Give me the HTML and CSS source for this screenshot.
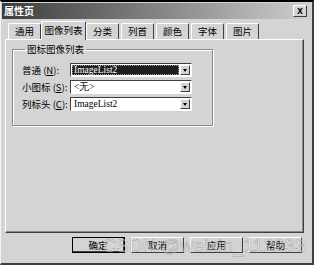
FILE: index.html
```html
<!DOCTYPE html>
<html lang="zh">
<head>
  <meta charset="UTF-8">
  <title>属性页</title>
  <link rel="stylesheet" href="styles.css">
</head>
<body>
  <div class="window">
    <div class="title-bar">
      <span class="title">属性页</span>
      <span class="close-btn">x</span>
    </div>

    <div class="tabs">
      <span class="tab">通用</span>
      <span class="tab active">图像列表</span>
      <span class="tab">分类</span>
      <span class="tab">列首</span>
      <span class="tab">颜色</span>
      <span class="tab">字体</span>
      <span class="tab">图片</span>
    </div>

    <div class="panel">
      <fieldset class="group">
        <legend>图标图像列表</legend>
        <div class="row">
          <span class="label">普通 (<u>N</u>):</span>
          <div class="combo selected">
            <span class="value">ImageList2</span>
            <span class="arrow"></span>
          </div>
        </div>
        <div class="row">
          <span class="label">小图标 (<u>S</u>):</span>
          <div class="combo">
            <span class="value">&lt;无&gt;</span>
            <span class="arrow"></span>
          </div>
        </div>
        <div class="row">
          <span class="label">列标头 (<u>C</u>):</span>
          <div class="combo">
            <span class="value">ImageList2</span>
            <span class="arrow"></span>
          </div>
        </div>
      </fieldset>
    </div>

    <div class="buttons">
      <button type="button" class="btn default">确定</button>
      <button type="button" class="btn">取消</button>
      <button type="button" class="btn">应用</button>
      <button type="button" class="btn">帮助</button>
    </div>

    <div class="watermark">CSDN @weixin_112233</div>
  </div>
</body>
</html>
```

FILE: styles.css
```css
*{margin: 0; padding: 0; box-sizing: border-box;}

html,body{
  width: 314px;
  height: 265px;
  overflow: hidden;
  background-color: #d4d4d4;
  font-family: "Noto Sans CJK SC", "Liberation Sans", sans-serif;
  font-size: 9.5px;
  color: #000;
}

.window{
  position: relative;
  width: 314px;
  height: 265px;
  border-top: 2px solid #000;
  border-left: 1px solid #f4f4f4;
  border-right: 2px solid #404040;
  border-bottom: 2px solid #404040;
  background-color: #d4d4d4;
}

.title-bar{
  height: 16px;
  margin: 1px 1px 0 1px;
  padding: 0 4px 0 2px;
  display: flex;
  align-items: center;
  justify-content: space-between;
  background: linear-gradient(to right, #3c3c3c, #8a8a8a 55%, #d0d0d0);
}
.title{
  color: #fff;
  font-weight: bold;
  font-size: 10px;
  line-height: 14px;
}
.close-btn{
  width: 14px;
  height: 12px;
  line-height: 10px;
  text-align: center;
  font-family: "Liberation Sans", sans-serif;
  font-weight: bold;
  font-size: 10px;
  background-color: #d4d4d4;
  border: 1px solid;
  border-color: #fff #404040 #404040 #fff;
}

.tabs{
  display: flex;
  align-items: flex-end;
  height: 19px;
  margin-top: 1px;
  padding-left: 7px;
}
.tab{
  width: 33px;
  height: 16px;
  text-align: center;
  line-height: 15px;
  border-top: 1px solid #fff;
  border-left: 1px solid #fff;
  border-right: 1px solid #404040;
  border-radius: 2px 2px 0 0;
  margin-right: 2px;
}
.tab.active{
  width: 45px;
  height: 19px;
  line-height: 17px;
  margin: 0 0 -1px -2px;
  position: relative;
  z-index: 1;
  background-color: #d4d4d4;
}

.panel{
  height: 194px;
  margin: 0 8px 0 4px;
  padding: 4px 0 0 6px;
  border: 1px solid;
  border-color: #fff #404040 #404040 #fff;
  box-shadow: inset -1px -1px 0 #8a8a8a;
}

.group{
  width: 201px;
  height: 82px;
  border: 1px solid #8a8a8a;
  box-shadow: 1px 1px 0 #fff, inset 1px 1px 0 #fff;
  padding: 6px 0 0 9px;
}
.group legend{
  padding: 0 2px;
  margin-left: 3px;
  line-height: 11px;
}

.row{
  display: flex;
  align-items: center;
  height: 17px;
}
.label{
  width: 48px;
  white-space: nowrap;
}
.label u{
  text-decoration: underline;
}

.combo{
  width: 122px;
  height: 14px;
  display: flex;
  align-items: center;
  background-color: #fff;
  border: 1px solid;
  border-color: #404040 #fff #fff #404040;
  padding: 1px;
}
.combo .value{
  flex: 1;
  height: 10px;
  line-height: 10px;
  padding-left: 2px;
  font-family: "Liberation Serif", serif;
  font-size: 9.5px;
}
.combo.selected .value{
  background-color: #1e1e1e;
  color: #fff;
  outline: 1px dotted #9a9a9a;
  outline-offset: -1px;
}
.arrow{
  width: 10px;
  height: 10px;
  margin-left: 1px;
  background-color: #d4d4d4;
  border: 1px solid;
  border-color: #fff #404040 #404040 #fff;
  position: relative;
}
.arrow::after{
  content: "";
  position: absolute;
  left: 2px;
  top: 3px;
  border-left: 2px solid transparent;
  border-right: 2px solid transparent;
  border-top: 3px solid #000;
}

.buttons{
  display: flex;
  gap: 6px;
  padding: 4px 0 0 71px;
}
.btn{
  width: 53px;
  height: 16px;
  font-family: "Noto Sans CJK SC", sans-serif;
  font-size: 9.5px;
  line-height: 12px;
  background-color: #d4d4d4;
  border: 1px solid;
  border-color: #fff #404040 #404040 #fff;
}
.btn.default{
  outline: 1px solid #000;
  outline-offset: -1px;
  border-width: 1px 2px 2px 1px;
}

.watermark{
  position: absolute;
  left: 102px;
  top: 234px;
  font-family: "Liberation Sans", sans-serif;
  font-size: 18px;
  letter-spacing: 0.5px;
  color: rgba(255, 255, 255, 0.5);
  -webkit-text-stroke: 0.5px rgba(110, 110, 110, 0.6);
  white-space: nowrap;
}
```
